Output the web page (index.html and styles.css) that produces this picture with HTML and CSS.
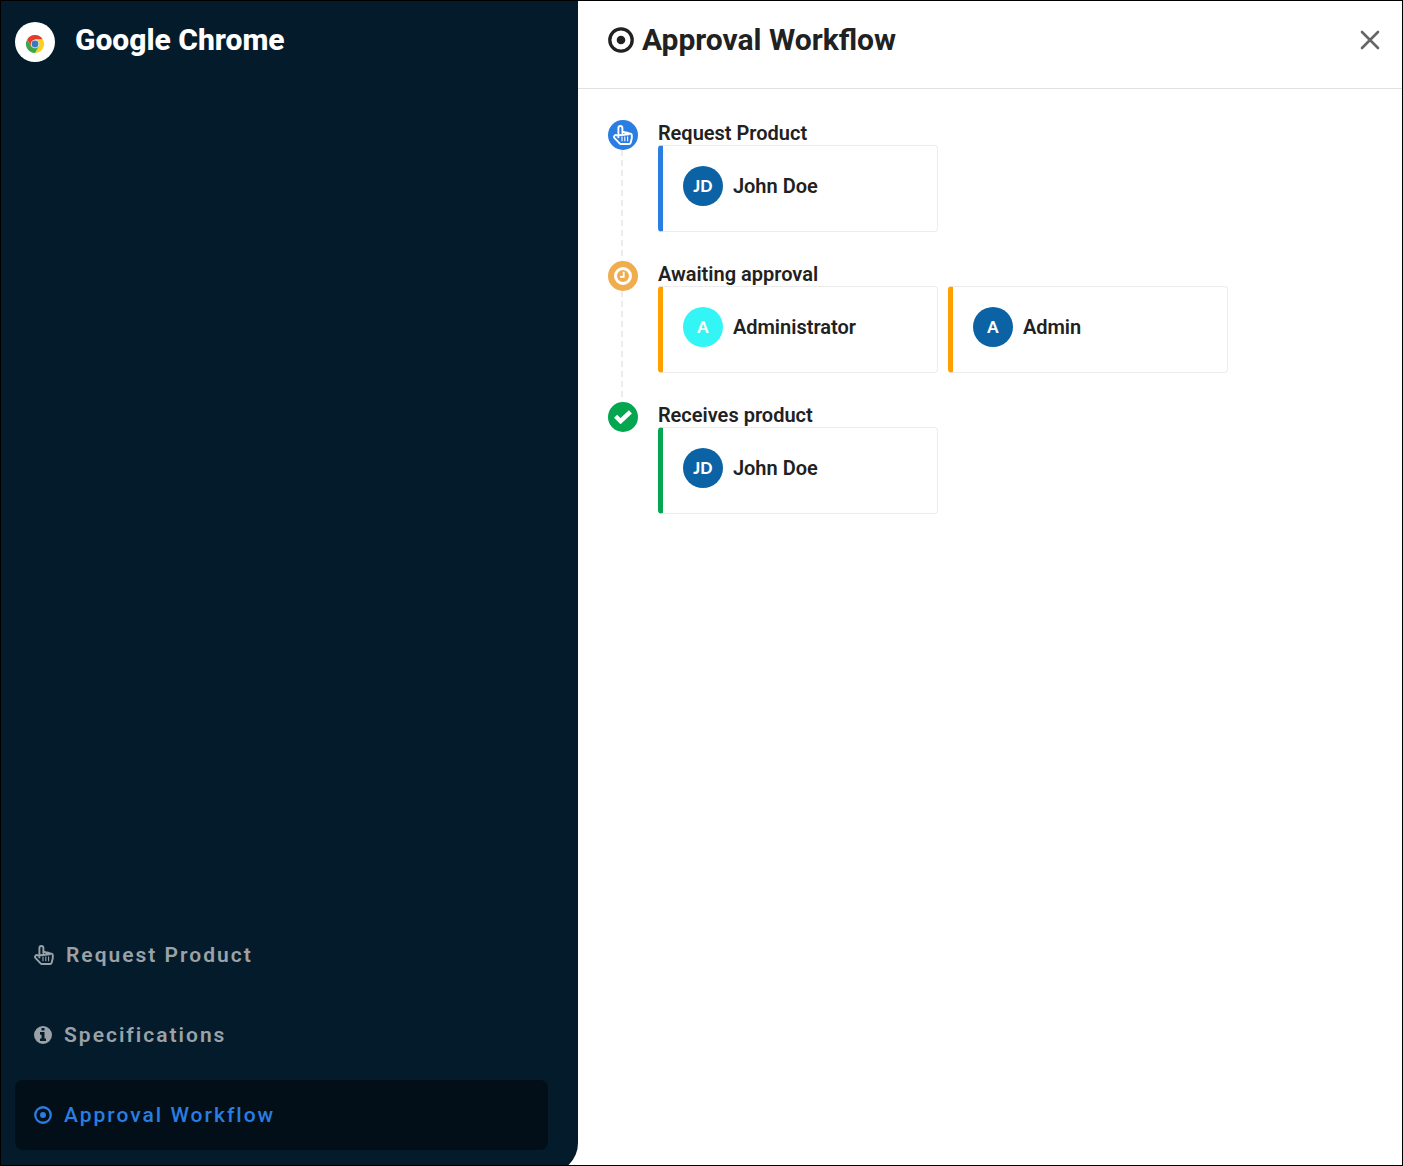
FILE: index.html
```html
<!DOCTYPE html>
<html lang="en">
<head>
<meta charset="utf-8">
<meta name="viewport" content="width=device-width, initial-scale=1">
<title>Google Chrome - Approval Workflow</title>
<link rel="stylesheet" href="styles.css">
</head>
<body>
<svg class="sprite" aria-hidden="true">
  <symbol id="i-hand" viewBox="0 0 20 20">
    <path fill="none" stroke="currentColor" stroke-width="1.9" stroke-linejoin="round" stroke-linecap="round" d="M5.400 12.400V3a2 2 0 0 1 4 0V8M9.400 7.900c.3-1.300 2.700-1.300 3.200.3v.6M12.600 8.400c.5-1.300 2.700-1 3.100.4v.6M15.700 9.200c.6-1.100 3.100-.8 3.100 1v2.200c0 2-.9 3.400-1.100 5.300-.1.900-.6 1.300-1.400 1.300H8c-.6 0-1-.2-1.400-.7L1.400 12.900c-1.200-1.700.8-3.700 2.600-2.400z"/>
    <path fill="none" stroke="currentColor" stroke-width="1.100" d="M9 11.500v4.700M11.800 11.500v4.700M14.600 11.500v4.700"/>
  </symbol>
  <symbol id="i-dot" viewBox="0 0 26 26">
    <circle cx="13" cy="13" r="11.200" fill="none" stroke="currentColor" stroke-width="3.300"/>
    <circle cx="13" cy="13" r="4.300" fill="currentColor"/>
  </symbol>
  <symbol id="i-info" viewBox="0 0 1536 1536">
    <path fill="currentColor" d="M1024 1248v-160q0-14-9-23t-23-9h-96V544q0-14-9-23t-23-9H544q-14 0-23 9t-9 23v160q0 14 9 23t23 9h96v320h-96q-14 0-23 9t-9 23v160q0 14 9 23t23 9h448q14 0 23-9t9-23zM896 352V192q0-14-9-23t-23-9H672q-14 0-23 9t-9 23v160q0 14 9 23t23 9h192q14 0 23-9t9-23zM1536 768a768 768 0 1 1-1536 0a768 768 0 1 1 1536 0z"/>
  </symbol>
  <symbol id="i-clock" viewBox="0 0 18 18">
    <circle cx="9" cy="9" r="7.500" fill="none" stroke="currentColor" stroke-width="3"/>
    <path fill="none" stroke="currentColor" stroke-width="1.800" d="M9.700 4.800v5.100H6"/>
  </symbol>
  <symbol id="i-check" viewBox="0 0 18 14">
    <path fill="none" stroke="currentColor" stroke-width="4.400" d="M1.600 6.200l5 5L16.400 1.800"/>
  </symbol>
</svg>
<div class="app">
  <aside class="sidebar">
    <div class="product">
      <span class="product-logo">
        <svg width="18" height="18" viewBox="0 0 18 18" aria-hidden="true">
          <path fill="#e33b2e" d="M1.200 4.500a9 9 0 0 1 15.600 0H9L5.100 11.300z"/>
          <path fill="#fbd01f" d="M16.800 4.500A9 9 0 0 1 9 18l3.900-6.700L9 4.500z"/>
          <path fill="#3aa648" d="M9 18A9 9 0 0 1 1.200 4.500l3.900 6.800h7.800z"/>
          <circle cx="9" cy="9" r="4.200" fill="#eef1f3"/>
          <circle cx="9" cy="9" r="3.400" fill="#3b79bd"/>
        </svg>
      </span>
      <h1 class="title">Google Chrome</h1>
    </div>
    <nav class="menu">
      <a class="menu-item" href="#request"><svg class="menu-icon menu-icon-wide"><use href="#i-hand"/></svg>Request Product</a>
      <a class="menu-item" href="#specifications"><svg class="menu-icon"><use href="#i-info"/></svg>Specifications</a>
      <a class="menu-item active" href="#workflow" aria-current="page"><svg class="menu-icon"><use href="#i-dot"/></svg>Approval Workflow</a>
    </nav>
  </aside>
  <main class="panel">
    <header class="panel-header">
      <svg class="panel-icon"><use href="#i-dot"/></svg>
      <h2 class="title title-panel">Approval Workflow</h2>
      <button class="close" type="button" aria-label="Close">
        <svg width="20" height="20" viewBox="0 0 20 20"><path fill="none" stroke="currentColor" stroke-width="2.600" stroke-linecap="round" d="M2 2l16 16M18 2L2 18"/></svg>
      </button>
    </header>
    <ol class="steps">
      <li class="step request">
        <div class="rail"><span class="badge"><svg width="20" height="20"><use href="#i-hand"/></svg></span></div>
        <div class="step-body">
          <h3 class="step-title">Request Product</h3>
          <div class="cards">
            <div class="card"><span class="avatar">JD</span><span class="name">John Doe</span></div>
          </div>
        </div>
      </li>
      <li class="step waiting">
        <div class="rail"><span class="badge"><svg width="18" height="18"><use href="#i-clock"/></svg></span></div>
        <div class="step-body">
          <h3 class="step-title">Awaiting approval</h3>
          <div class="cards">
            <div class="card"><span class="avatar avatar-cyan">A</span><span class="name">Administrator</span></div>
            <div class="card"><span class="avatar">A</span><span class="name">Admin</span></div>
          </div>
        </div>
      </li>
      <li class="step received">
        <div class="rail"><span class="badge"><svg width="18" height="14"><use href="#i-check"/></svg></span></div>
        <div class="step-body">
          <h3 class="step-title">Receives product</h3>
          <div class="cards">
            <div class="card"><span class="avatar">JD</span><span class="name">John Doe</span></div>
          </div>
        </div>
      </li>
    </ol>
  </main>
</div>
</body>
</html>
```
FILE: styles.css
```css
* { box-sizing: border-box; }

body {
  margin: 0;
  font-family: Roboto, "Liberation Sans", sans-serif;
  font-size: 20px;
  color: #212121;
  background: #fff;
}

h1, h2, h3, ol { margin: 0; padding: 0; }

.sprite { display: none; }

.app {
  display: grid;
  grid-template-columns: 7fr 10fr;
  min-height: 100vh;
  border: 1px solid #000;
  overflow: hidden;
}

.sidebar {
  display: flex;
  flex-direction: column;
  justify-content: space-between;
  margin-bottom: -8px;
  padding: 20px 30px 23px 14px;
  background: #041b2b;
  border-bottom-right-radius: 30px;
}

.product {
  display: flex;
  align-items: flex-start;
  gap: 20px;
}

.product-logo {
  display: flex;
  align-items: center;
  justify-content: center;
  width: 40px;
  height: 40px;
  margin-top: 1px;
  padding-top: 4px;
  border-radius: 50%;
  background: #fff;
}

.title {
  font-size: 30px;
  line-height: 38px;
  font-weight: 800;
  color: #fff;
}

.title-panel {
  font-weight: 700;
  color: #212121;
}

.menu {
  display: flex;
  flex-direction: column;
  gap: 10px;
}

.menu-item {
  display: flex;
  align-items: center;
  gap: 12px;
  height: 70px;
  padding: 0 19px;
  border-radius: 8px;
  color: #9aa2a8;
  font-size: 21px;
  font-weight: 600;
  letter-spacing: 2px;
  text-decoration: none;
}

.menu-item.active {
  background: #020f18;
  color: #2a7de1;
  font-weight: 500;
}

.menu-icon {
  width: 18px;
  height: 18px;
}

.menu-icon-wide {
  width: 20px;
  height: 20px;
}

.panel-header {
  display: flex;
  align-items: center;
  gap: 8px;
  height: 88px;
  padding: 0 20px 10px 30px;
  border-bottom: 1px solid #e0e0e0;
}

.panel-icon {
  width: 26px;
  height: 26px;
}

.close {
  display: flex;
  margin-left: auto;
  padding: 2px;
  border: 0;
  background: none;
  color: #666;
}

.steps {
  padding: 31px 30px;
  list-style: none;
}

.step {
  display: grid;
  grid-template-columns: 30px 1fr;
  gap: 20px;
}

.rail {
  background: repeating-linear-gradient(#ececef 0 6px, transparent 6px 10px) 13px 0 / 2px 100% no-repeat;
}

.step:last-child .rail { background: none; }

.badge {
  display: flex;
  align-items: center;
  justify-content: center;
  width: 30px;
  height: 30px;
  border-radius: 50%;
  background: var(--tone);
  color: #fff;
}

.step-title {
  padding-top: 2px;
  font-size: 20px;
  line-height: 23px;
  font-weight: 600;
}

.cards {
  display: flex;
  flex-wrap: wrap;
  gap: 10px;
  padding-bottom: 29px;
}

.card {
  display: flex;
  gap: 10px;
  width: 280px;
  padding: 20px 20px 25px;
  border: 1px solid #ececec;
  border-left: 5px solid var(--edge, var(--tone));
  border-radius: 4px;
}

.avatar {
  display: flex;
  align-items: center;
  justify-content: center;
  width: 40px;
  height: 40px;
  border-radius: 50%;
  background: #0b63a5;
  color: #fff;
  font: 900 16px/20px Lato, sans-serif;
}

.avatar-cyan { background: #33f5f5; }

.name {
  line-height: 40px;
  font-weight: 600;
}

.request { --tone: #2a7de1; }
.waiting { --tone: #f0ad4e; --edge: #ff9f00; }
.received { --tone: #05a650; }
```
